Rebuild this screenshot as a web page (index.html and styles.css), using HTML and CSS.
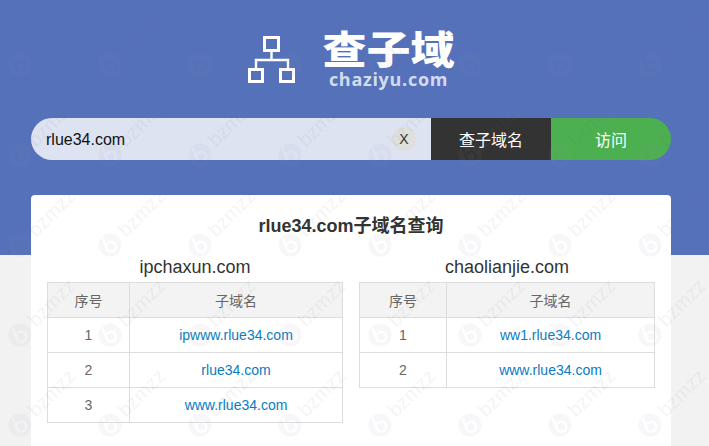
FILE: index.html
```html
<!DOCTYPE html>
<html lang="zh-CN">
<head>
<meta charset="utf-8">
<title>查子域</title>
<link rel="stylesheet" href="styles.css">
</head>
<body>
<header class="hero">
  <div class="wrap">
    <div class="brand">
      <svg class="brand-icon" width="48" height="48" viewBox="0 0 48 48" fill="none" stroke="#fff">
        <rect x="16.5" y="1.5" width="14" height="13" stroke-width="3"/>
        <rect x="1.5" y="33.5" width="13" height="12" stroke-width="3"/>
        <rect x="32.5" y="33.5" width="13" height="12" stroke-width="3"/>
        <path d="M23.5 15V23.5M8 32V24H40V32" stroke-width="2.4"/>
      </svg>
      <div class="brand-text">
        <div class="brand-name">查子域</div>
        <div class="brand-domain">chaziyu.com</div>
      </div>
    </div>
    <form class="search">
      <div class="search-field">
        <span class="search-value">rlue34.com</span>
        <span class="search-clear">X</span>
      </div>
      <button class="btn btn-dark" type="button">查子域名</button>
      <button class="btn btn-green" type="button">访问</button>
    </form>
  </div>
</header>
<main class="wrap card">
  <h1 class="card-title">rlue34.com子域名查询</h1>
  <div class="columns">
    <section>
      <h2 class="source">ipchaxun.com</h2>
      <table class="results">
        <colgroup><col class="col-a"><col></colgroup>
        <thead><tr><th>序号</th><th>子域名</th></tr></thead>
        <tbody>
          <tr><td>1</td><td><a href="#">ipwww.rlue34.com</a></td></tr>
          <tr><td>2</td><td><a href="#">rlue34.com</a></td></tr>
          <tr><td>3</td><td><a href="#">www.rlue34.com</a></td></tr>
        </tbody>
      </table>
    </section>
    <section>
      <h2 class="source">chaolianjie.com</h2>
      <table class="results">
        <colgroup><col class="col-b"><col></colgroup>
        <thead><tr><th>序号</th><th>子域名</th></tr></thead>
        <tbody>
          <tr><td>1</td><td><a href="#">ww1.rlue34.com</a></td></tr>
          <tr><td>2</td><td><a href="#">www.rlue34.com</a></td></tr>
        </tbody>
      </table>
    </section>
  </div>
</main>
<svg class="watermark" width="709" height="446" aria-hidden="true">
  <defs>
    <mask id="wm-b" maskUnits="userSpaceOnUse" x="0" y="0" width="90" height="90">
      <rect width="90" height="90" fill="#fff"/>
      <g transform="rotate(-20 20 65)" fill="none" stroke="#000" stroke-width="2.4">
        <circle cx="20.5" cy="67" r="5"/>
        <path d="M15.5 67V55.5"/>
      </g>
    </mask>
    <pattern id="wm" width="90" height="90" patternUnits="userSpaceOnUse">
      <circle class="wm-disc" cx="20" cy="65" r="11.5" mask="url(#wm-b)"/>
      <text class="wm-text" x="0" y="0" transform="translate(36 58) rotate(-45)">bzmzz</text>
    </pattern>
  </defs>
  <rect width="709" height="446" fill="url(#wm)"/>
</svg>
</body>
</html>
```

FILE: styles.css
```css
* { box-sizing: border-box; }
html, body { height: 446px; overflow: hidden; }
body {
  margin: 0;
  position: relative;
  background: #f2f2f2;
  color: #333;
  font-family: "Liberation Sans", "Noto Sans CJK SC", sans-serif;
}
.wrap { width: 640px; margin-left: 31px; }
.hero { height: 255px; background: #5571b9; padding-top: 26px; }
.brand { display: flex; align-items: flex-start; justify-content: center; gap: 27px; height: 92px; }
.brand-icon { margin-top: 10px; }
.brand-text { text-align: center; padding-top: 2px; }
.brand-name {
  font-family: "Noto Sans CJK SC", sans-serif;
  font-weight: 900;
  font-size: 44px;
  line-height: 38px;
  color: #fff;
  transform: scaleY(.88);
}
.brand-domain {
  font-family: "Open Sans", sans-serif;
  font-weight: 700;
  font-size: 18px;
  line-height: 20px;
  letter-spacing: .7px;
  color: #d3dbef;
  margin-top: 3px;
}
.search { display: flex; height: 42px; border-radius: 21px; overflow: hidden; }
.search-field {
  width: 400px;
  background: #dde3f1;
  display: flex;
  align-items: center;
  justify-content: space-between;
  padding: 0 15px;
  color: #111;
  font-size: 16px;
}
.search-value { padding-top: 2px; }
.search-clear {
  width: 24px;
  height: 24px;
  border-radius: 50%;
  background: #dfdfdc;
  color: #333;
  font-size: 14px;
  line-height: 24px;
  text-align: center;
}
.btn {
  width: 120px;
  border: 0;
  padding: 0;
  color: #fff;
  font-family: inherit;
  font-size: 16px;
}
.btn-dark { background: #333; }
.btn-green { background: #4caf50; }
.card {
  margin-top: -60px;
  height: 260px;
  position: relative;
  background: #fff;
  border-radius: 4px 4px 0 0;
  padding: 0 16px;
}
.card-title {
  margin: 0;
  padding-top: 20px;
  height: 54px;
  font-size: 18px;
  line-height: 22px;
  font-weight: 700;
  text-align: center;
  color: #333;
}
.columns { display: grid; grid-template-columns: 296px 296px; gap: 16px; }
.source {
  margin: 0;
  height: 33px;
  padding-top: 8px;
  font-size: 18px;
  line-height: 20px;
  font-weight: 400;
  text-align: center;
  color: #333;
}
.results { width: 296px; table-layout: fixed; border-collapse: collapse; font-size: 14px; }
.col-a { width: 82px; }
.col-b { width: 87px; }
.results th, .results td {
  height: 35px;
  padding: 0;
  border: 1px solid #ddd;
  text-align: center;
  font-weight: 400;
  color: #666;
}
.results th { background: #f3f3f3; }
.results a { color: #0a7cc1; text-decoration: none; }
.watermark { position: absolute; left: 0; top: 0; pointer-events: none; }
.wm-disc { fill: rgba(135, 145, 165, .07); }
.wm-text { fill: rgba(100, 100, 110, .07); font: 400 20px "Liberation Sans", sans-serif; }
```
